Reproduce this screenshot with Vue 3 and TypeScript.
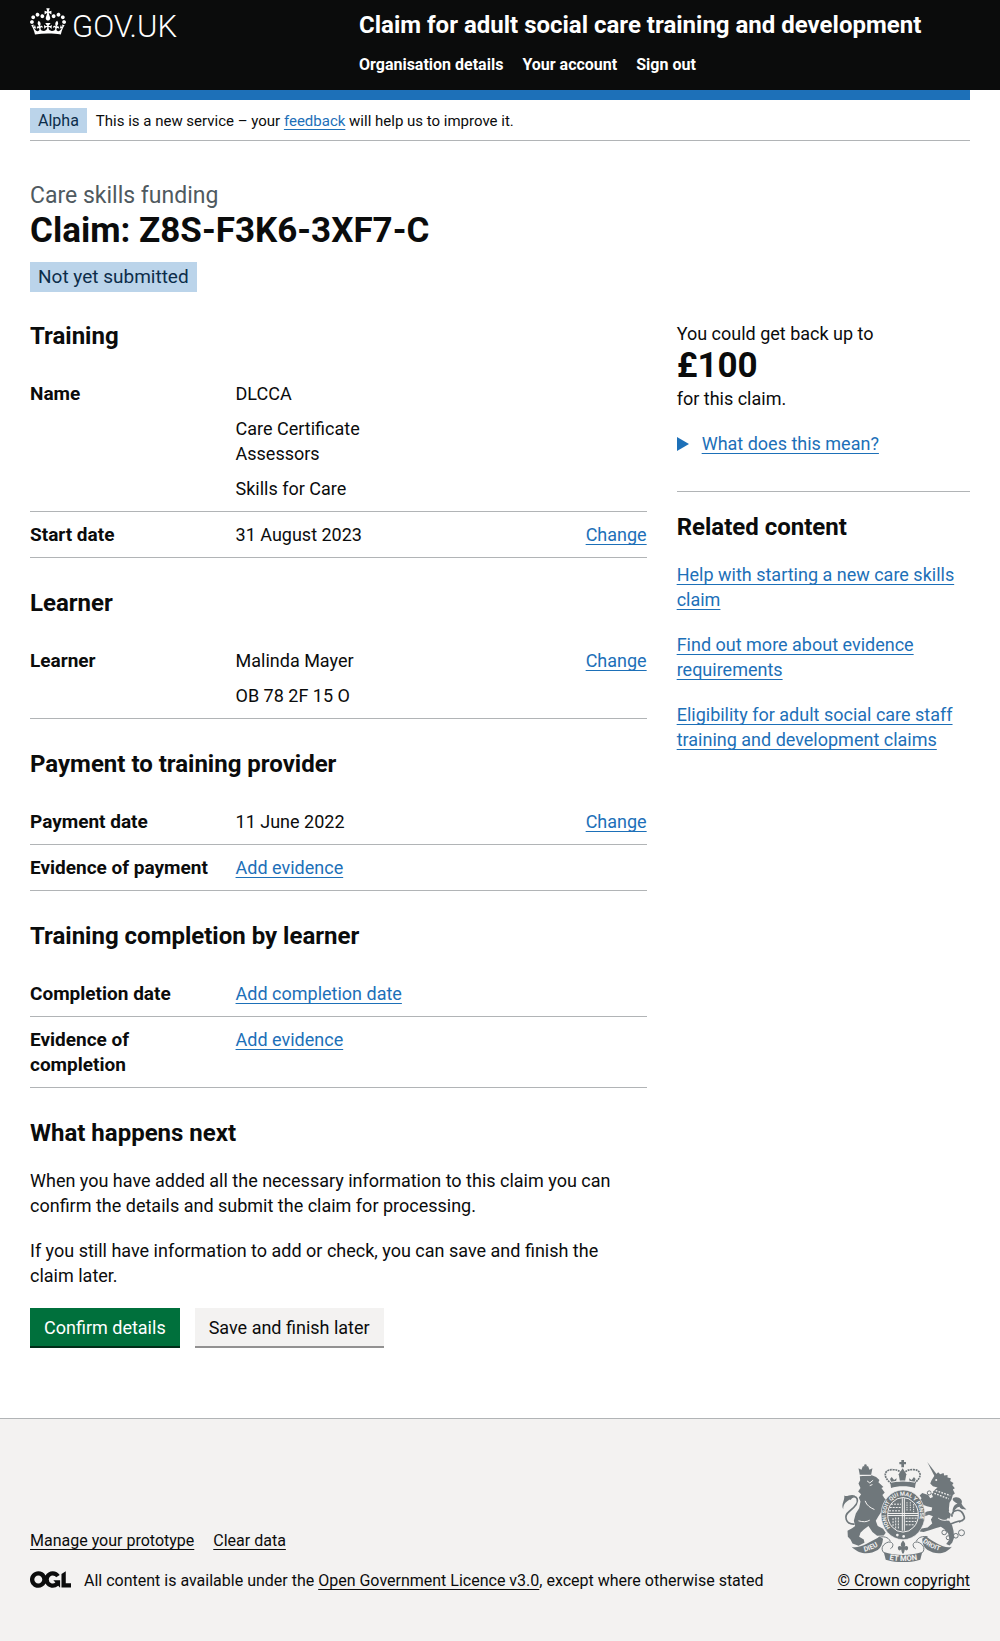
<script setup lang="ts">
interface Row {
  key: string
  values?: string[]
  add?: string
  change?: boolean
}
interface Section {
  title: string
  rows: Row[]
}

const navigation: string[] = ['Organisation details', 'Your account', 'Sign out']

const sections: Section[] = [
  {
    title: 'Training',
    rows: [
      { key: 'Name', values: ['DLCCA', 'Care Certificate Assessors', 'Skills for Care'] },
      { key: 'Start date', values: ['31 August 2023'], change: true },
    ],
  },
  {
    title: 'Learner',
    rows: [{ key: 'Learner', values: ['Malinda Mayer', 'OB 78 2F 15 O'], change: true }],
  },
  {
    title: 'Payment to training provider',
    rows: [
      { key: 'Payment date', values: ['11 June 2022'], change: true },
      { key: 'Evidence of payment', add: 'Add evidence' },
    ],
  },
  {
    title: 'Training completion by learner',
    rows: [
      { key: 'Completion date', add: 'Add completion date' },
      { key: 'Evidence of completion', add: 'Add evidence' },
    ],
  },
]

const related: string[] = [
  'Help with starting a new care skills claim',
  'Find out more about evidence requirements',
  'Eligibility for adult social care staff training and development claims',
]
</script>

<template>
  <div class="page">
    <header class="header">
      <div class="header-inner container">
        <a href="#" class="logo" aria-label="GOV.UK">
          <svg class="crown" viewBox="0 0 132 97" width="36" height="27" fill="currentColor" aria-hidden="true">
            <path fill-rule="evenodd" d="M25 30.2c3.5 1.5 7.7-.2 9.1-3.7 1.5-3.6-.2-7.8-3.9-9.2-3.6-1.4-7.6.3-9.1 3.9-1.4 3.5.3 7.5 3.9 9zM9 39.5c3.6 1.5 7.8-.2 9.2-3.7 1.5-3.6-.2-7.8-3.9-9.1-3.6-1.5-7.6.2-9.1 3.8-1.4 3.5.3 7.5 3.8 9zM4.4 57.2c3.5 1.5 7.7-.2 9.1-3.8 1.5-3.6-.2-7.7-3.9-9.1-3.5-1.5-7.6.3-9.1 3.8-1.4 3.5.3 7.6 3.9 9.1zm38.3-21.4c3.5 1.5 7.7-.2 9.1-3.8 1.5-3.6-.2-7.7-3.9-9.1-3.6-1.5-7.6.3-9.1 3.8-1.3 3.6.4 7.7 3.9 9.1zm64.4-5.6c-3.6 1.5-7.8-.2-9.1-3.7-1.5-3.6.2-7.8 3.8-9.2 3.6-1.4 7.7.3 9.2 3.9 1.3 3.5-.4 7.5-3.9 9zm15.9 9.3c-3.6 1.5-7.7-.2-9.1-3.7-1.5-3.6.2-7.8 3.7-9.1 3.6-1.5 7.7.2 9.2 3.8 1.5 3.5-.3 7.5-3.8 9zm4.7 17.7c-3.6 1.5-7.8-.2-9.2-3.8-1.5-3.6.2-7.7 3.9-9.1 3.6-1.5 7.7.3 9.2 3.8 1.3 3.5-.4 7.6-3.9 9.1zM89.3 35.8c-3.6 1.5-7.8-.2-9.2-3.8-1.4-3.6.2-7.7 3.9-9.1 3.6-1.5 7.7.3 9.2 3.8 1.4 3.6-.3 7.7-3.9 9.1zM69.7 17.7l8.9 4.7V9.3l-8.9 2.8c-.2-.3-.5-.6-.9-.9L72.4 0H59.6l3.5 11.2c-.3.3-.6.5-.9.9l-8.8-2.8v13.1l8.8-4.7c.3.3.6.7.9.9l-5 15.4v.1c-.2.8-.4 1.6-.4 2.4 0 4.1 3.1 7.5 7 8.1h.2c.3 0 .7.1 1 .1.4 0 .7 0 1-.1h.2c4-.6 7.1-4.1 7.1-8.1 0-.8-.1-1.7-.4-2.4V34l-5.1-15.4c.4-.2.7-.6 1-.9zM66 92.8c16.9 0 32.8 1.1 47.1 3.2 4-16.9 8.9-26.7 14-33.5l-9.6-3.4c1 4.9 1.1 7.2 0 10.2-1.5-1.4-3-4.3-4.2-8.7L108.6 76c2.8-2 5-3.2 7.5-3.3-4.4 9.4-10 11.9-13.6 11.2-4.3-.8-6.3-4.6-5.6-7.9 1-4.7 5.7-5.9 8-.5 4.3-8.7-3-11.4-7.6-8.8 7.1-7.2 7.9-13.5 2.1-21.1-8 6.1-8.1 12.3-4.5 20.8-4.7-5.4-12.1-2.5-9.5 6.2 3.4-5.2 7.9-2 7.2 3.1-.6 4.3-6.4 7.8-13.5 7.2-10.3-.9-10.9-8-11.2-13.8 2.5-.5 7.1 1.8 11 7.3L80.2 60c-4.1 4.4-8 5.3-12.3 5.4 1.4-4.4 8-11.6 8-11.6H55.5s6.4 7.2 7.9 11.6c-4.2-.1-8-1-12.3-5.4l1.4 16.4c3.9-5.5 8.5-7.7 10.9-7.3-.3 5.8-.9 12.8-11.1 13.8-7.2.6-12.9-2.9-13.5-7.2-.7-5 3.8-8.3 7.1-3.1 2.7-8.7-4.6-11.6-9.4-6.2 3.7-8.5 3.6-14.7-4.6-20.8-5.8 7.6-5 13.9 2.2 21.1-4.7-2.6-11.9.1-7.7 8.8 2.3-5.5 7.1-4.2 8.1.5.7 3.3-1.3 7.1-5.7 7.9-3.5.7-9-1.8-13.5-11.2 2.5.1 4.7 1.3 7.5 3.3l-4.7-15.4c-1.2 4.4-2.7 7.2-4.3 8.7-1.1-3-.9-5.3 0-10.2l-9.5 3.4c5 6.9 9.9 16.7 14 33.5 14.8-2.1 30.8-3.2 47.7-3.2z" />
          </svg>
          <span class="logotype">GOV.UK</span>
        </a>
        <div class="header-content">
          <a href="#" class="service-name">Claim for adult social care training and development</a>
          <nav class="nav" aria-label="Menu">
            <a v-for="item in navigation" :key="item" href="#">{{ item }}</a>
          </nav>
        </div>
      </div>
    </header>

    <div class="container">
      <div class="blue-bar"></div>
      <div class="phase-banner">
        <strong class="tag tag-small">Alpha</strong>
        <span class="phase-text">This is a new service – your <a href="#" class="link">feedback</a> will help us to improve it.</span>
      </div>

      <main class="main">
        <span class="caption">Care skills funding</span>
        <h1>Claim: Z8S-F3K6-3XF7-C</h1>
        <strong class="tag">Not yet submitted</strong>

        <div class="columns">
          <div class="primary">
            <section v-for="section in sections" :key="section.title" class="section">
              <h2>{{ section.title }}</h2>
              <dl class="summary">
                <div v-for="row in section.rows" :key="row.key" class="row">
                  <dt>{{ row.key }}</dt>
                  <dd class="value">
                    <p v-for="value in row.values" :key="value">{{ value }}</p>
                    <a v-if="row.add" href="#" class="link">{{ row.add }}</a>
                  </dd>
                  <dd class="action"><a v-if="row.change" href="#" class="link">Change</a></dd>
                </div>
              </dl>
            </section>

            <section class="next">
              <h2>What happens next</h2>
              <p>When you have added all the necessary information to this claim you can confirm the details and submit the claim for processing.</p>
              <p>If you still have information to add or check, you can save and finish the claim later.</p>
              <div class="buttons">
                <button type="button" class="button">Confirm details</button>
                <button type="button" class="button secondary">Save and finish later</button>
              </div>
            </section>
          </div>

          <aside class="aside">
            <div>You could get back up to</div>
            <div class="amount">£100</div>
            <div>for this claim.</div>
            <details class="details">
              <summary>
                <svg class="arrow" viewBox="0 0 12 14" width="12" height="14" aria-hidden="true"><path d="M0 0 12 7 0 14z" fill="#1d70b8" /></svg>
                <span class="link">What does this mean?</span>
              </summary>
            </details>
            <div class="related">
              <h2>Related content</h2>
              <ul>
                <li v-for="item in related" :key="item"><a href="#" class="link">{{ item }}</a></li>
              </ul>
            </div>
          </aside>
        </div>
      </main>
    </div>

    <footer class="footer">
      <div class="footer-inner container">
        <div class="footer-meta">
          <ul class="footer-links">
            <li><a href="#">Manage your prototype</a></li>
            <li><a href="#">Clear data</a></li>
          </ul>
          <div class="licence">
            <svg class="ogl" viewBox="0 0 483 196" width="41" height="17" aria-hidden="true">
              <path fill="currentColor" d="M421.5 142.8V.1l-50.7 32.3v161.1h112.4v-50.7zm-122.3-9.6A47.12 47.12 0 0 1 221 97.8c0-26 21.1-47.1 47.1-47.1 16.7 0 31.4 8.7 39.7 21.8l42.7-27.2A97.63 97.63 0 0 0 268.1 0c-36.5 0-68.3 20.1-85.1 49.7A98 98 0 0 0 97.8 0C43.9 0 0 43.9 0 97.8s43.9 97.8 97.8 97.8c36.5 0 68.3-20.1 85.1-49.7a97.76 97.76 0 0 0 149.6 25.4l19.4 22.2h3v-87.8h-80l24.3 27.5zM97.8 145c-26 0-47.1-21.1-47.1-47.1s21.1-47.1 47.1-47.1 47.1 21.1 47.1 47.1S123.8 145 97.8 145" />
            </svg>
            <span>All content is available under the <a href="#">Open Government Licence v3.0</a>, except where otherwise stated</span>
          </div>
        </div>
        <div class="copyright">
          <svg class="crest" viewBox="64 54 378 310" width="126" height="103" aria-hidden="true">
            <g fill="#6f777b">
              <!-- lion -->
              <path d="M120 102 116 82l9 4 4-10h16l4 10 9-4-4 20z" />
              <circle cx="137" cy="74" r="4" />
              <path d="M120 106 156 103 169 108 179 117 176 124 191 138 185 141 195 155 188 162 194 172 202 178 207 184 200 190 190 187 196 197 206 205 206 216 196 222 184 214 176 226 168 240 174 256 190 264 198 276 192 284 172 285 158 274 146 256 132 266 122 276 118 288 132 296 134 306 116 315 98 308 92 296 84 288 83 270 98 262 106 256 102 240 108 218 118 202 122 182 117 170 124 160 115 152 122 141 116 128 121 118z" />
              <path d="M70 205C62 190 76 178 73 164 82 170 90 158 106 164 98 166 92 176 84 180 76 186 70 192 70 205z" />
              <!-- unicorn -->
              <path d="M323 63 352 101 345 106z" />
              <path d="M345 104 356 94 362 100 372 96 374 104 384 102 384 110 394 112 392 120 402 126 398 132 406 142 400 146 406 158 400 162 396 176 390 186 388 205 394 222 388 238 398 254 402 270 404 290 398 306 390 314 380 310 390 296 386 278 376 266 364 258 350 262 332 268 312 274 300 272 302 264 324 260 338 248 334 236 340 226 328 222 316 226 306 222 322 212 336 210 338 200 322 196 306 190 300 178 306 172 300 164 308 156 326 162 332 172 340 168 336 158 344 148 354 140 340 136 332 128 336 118z" />
              <path d="M401 222C396 206 402 192 414 188 400 182 394 172 406 170 418 166 432 178 426 188 430 198 436 200 441 206 430 206 424 206 420 198 410 200 404 208 401 222z" />
              <!-- royal crown -->
              <path d="M245 57h8v6h6v7h-6v9h-8v-9h-6v-7h6z" />
              <path d="M212 127c12-8 66-8 76 0l-2 14c-18-7-54-7-72 0z" />
              <path d="M249 82l11 18-5 28h-13l-5-28z" />
              <path d="M216 108l7 9 8-5-3 15h-12l-5-13zM283 108l-7 9-8-5 3 15h12l5-13z" />
              <!-- shield and garter -->
              <ellipse cx="250" cy="222" rx="66" ry="75" stroke="#f3f2f1" stroke-width="2" />
              <!-- scrolls -->
              <path d="M95 318C116 326 150 304 180 288L190 294C188 310 184 320 174 328 152 340 124 346 95 318z" />
              <path d="M397 318C376 326 342 304 318 286L308 294C308 310 314 320 324 328 346 340 372 346 397 318z" />
              <path d="M192 334C226 346 272 346 308 334L302 357C272 367 228 367 198 357z" />
              <!-- fleur-de-lis -->
              <path d="M250 299c8 8 8 14 4 20 4-6 14-4 11 6-1 5-8 6-9 1-2 4-1 10-6 14-5-4-4-10-6-14-1 5-8 4-9-1-3-10 7-12 11-6-4-6-4-12 4-20z" />
            </g>
            <g fill="none" stroke="#6f777b">
              <path stroke-width="5" d="M104 250C78 252 70 226 88 212S116 184 112 174C108 164 96 166 90 176" />
              <path stroke-width="5" d="M392 250C406 246 416 238 430 240M398 228C392 210 420 200 430 218S434 236 418 244" />
              <path stroke-width="5" stroke-dasharray="6 2" d="M216 128C184 106 196 84 220 86 238 86 246 94 249 106 252 94 260 86 278 86 302 84 314 106 282 128" />
              <path stroke-width="3" d="M192 336C180 322 192 308 206 304 224 302 222 320 212 324M308 336C320 322 308 308 294 304 276 302 278 320 288 324M176 290C190 286 206 288 212 302M324 288C310 286 296 288 290 302" />
              <g stroke-width="3">
                <circle cx="329" cy="156" r="6" />
                <circle cx="374" cy="275" r="7" />
                <circle cx="386" cy="291" r="6" />
                <circle cx="409" cy="285" r="7" />
                <circle cx="426" cy="276" r="9" />
              </g>
            </g>
            <g fill="none" stroke="#f3f2f1">
              <ellipse cx="250" cy="222" rx="46" ry="52" stroke-width="3" />
              <path stroke-width="3" d="M248 172v98M254 172v98M204 218h92M204 224h92" />
              <path stroke-width="3" stroke-dasharray="6 3" d="M214 190h30M210 200h34M208 210h36M220 232v24M228 230v34M236 230v36M258 232h34M258 242h32M258 252h26" />
              <path stroke-width="3" stroke-dasharray="4 3" d="M262 184v28M272 184v28M282 190v24" />
              <path stroke-width="4" stroke-dasharray="5 4" d="M336 154 388 174M340 146 392 164" />
              <path stroke-width="3" d="M120 103h34M142 120l8 6 10-8M150 134l8-3M214 124c18-5 54-5 72 0M136 180c4 14 18 22 28 26M116 240c14 4 24 4 34-2M356 232c12 8 22 8 30 4" />
            </g>
            <g fill="#f3f2f1">
              <circle cx="233" cy="283" r="4" />
              <circle cx="252" cy="287" r="4" />
              <circle cx="393" cy="212" r="5" />
              <circle cx="386" cy="236" r="4" />
              <circle cx="350" cy="117" r="3" />
            </g>
            <defs>
              <path id="garter" d="M212 261A51 58 0 1 1 288 261" />
              <path id="scroll-left" d="M134 333Q160 328 190 305" />
              <path id="scroll-mid" d="M204 356Q250 366 300 356" />
              <path id="scroll-right" d="M309 304Q334 326 376 334" />
            </defs>
            <g fill="#f3f2f1" class="motto">
              <text font-size="17"><textPath href="#garter">HONI SOIT QUI MAL Y PENSE</textPath></text>
              <text font-size="21"><textPath href="#scroll-left">DIEU</textPath></text>
              <text font-size="23"><textPath href="#scroll-mid" startOffset="5">ET MON</textPath></text>
              <text font-size="20"><textPath href="#scroll-right">DROIT</textPath></text>
            </g>
          </svg>
          <a href="#">© Crown copyright</a>
        </div>
      </div>
    </footer>
  </div>
</template>

<style>
body {
  margin: 0;
  background: #f3f2f1;
}
</style>

<style scoped>
.page {
  background: #fff;
  color: #0b0c0c;
  font-family: Roboto, "Liberation Sans", sans-serif;
  font-size: 18px;
  line-height: 25px;
}
h1,
h2,
p,
ul,
dl,
dd {
  margin: 0;
}
ul {
  padding: 0;
  list-style: none;
}
.container {
  max-width: 960px;
  margin: 0 auto;
  padding: 0 30px;
}
.link {
  color: #1d70b8;
  text-decoration: underline;
  text-decoration-thickness: 1px;
  text-underline-offset: 3px;
  text-decoration-skip-ink: none;
}
.header {
  background: #0b0c0c;
  color: #fff;
}
.header-inner {
  display: flex;
  padding-bottom: 15px;
}
.header a {
  color: #fff;
  text-decoration: none;
}
.logo {
  display: flex;
  width: 35%;
  align-items: flex-start;
  gap: 6px;
  padding-top: 8px;
}
.logotype {
  font-size: 31px;
  line-height: 38px;
  font-weight: 300;
}
.header-content {
  padding-top: 10px;
}
.service-name {
  display: block;
  font-size: 24px;
  line-height: 30px;
  font-weight: 700;
}
.nav {
  display: flex;
  gap: 19px;
  padding-top: 15px;
  font-size: 16px;
  line-height: 20px;
  font-weight: 700;
}
.blue-bar {
  height: 10px;
  background: #1d70b8;
}
.phase-banner {
  display: flex;
  align-items: center;
  gap: 9px;
  padding: 8px 0 7px;
  border-bottom: 1px solid #b1b4b6;
  font-size: 15px;
  line-height: 20px;
}
.tag {
  display: block;
  width: fit-content;
  padding: 2px 8px 3px;
  background: #bbd4ea;
  color: #0c2d4a;
  font-size: 19px;
  font-weight: 400;
}
.tag-small {
  padding: 3px 8px 2px;
  font-size: 16px;
}
.main {
  padding: 40px 0 72px;
}
.caption {
  display: block;
  color: #505a5f;
  font-size: 23px;
  line-height: 30px;
}
h1 {
  margin-bottom: 11px;
  font-size: 35px;
  line-height: 40px;
}
h2 {
  margin-bottom: 20px;
  font-size: 24px;
  line-height: 30px;
}
.columns {
  display: flex;
  gap: 30px;
  margin-top: 29px;
}
.primary {
  flex: none;
  width: calc(66.6667% - 10px);
}
.aside {
  flex: 1;
}
.section {
  margin-bottom: 30px;
}
.row {
  display: flex;
  border-bottom: 1px solid #b1b4b6;
  padding: 10px 0;
}
dt,
.value {
  box-sizing: border-box;
  width: 33.3333%;
  padding-right: 20px;
}
dt {
  font-size: 19px;
  font-weight: 700;
}
.value p + p {
  margin-top: 10px;
}
.action {
  flex: 1;
  text-align: right;
}
.next p {
  margin-bottom: 20px;
  padding-right: 20px;
}
.buttons {
  display: flex;
  gap: 15px;
}
.button {
  border: 0;
  padding: 7px 14px 6px;
  background: #00703c;
  box-shadow: 0 2px 0 #002d18;
  color: #fff;
  font: inherit;
}
.secondary {
  background: #f3f2f1;
  box-shadow: 0 2px 0 #929191;
  color: #0b0c0c;
}
.amount {
  font-size: 35px;
  line-height: 40px;
  font-weight: 700;
}
.details {
  margin: 20px 0 35px;
}
summary {
  display: flex;
  align-items: center;
  gap: 13px;
  list-style: none;
}
.related {
  padding-top: 20px;
  border-top: 1px solid #b1b4b6;
}
.related li {
  margin-bottom: 20px;
}
.footer {
  border-top: 1px solid #b1b4b6;
  background: #f3f2f1;
  font-size: 16px;
  line-height: 20px;
}
.footer-inner {
  display: flex;
  align-items: flex-end;
  justify-content: space-between;
  padding-top: 40px;
  padding-bottom: 50px;
}
.footer a {
  color: #0b0c0c;
  text-decoration: underline;
  text-decoration-thickness: 1px;
  text-underline-offset: 3px;
  text-decoration-skip-ink: none;
}
.footer-links {
  display: flex;
  gap: 19px;
  margin-bottom: 20px;
}
.licence {
  display: flex;
  gap: 13px;
}
.ogl {
  flex: none;
}
.copyright {
  display: flex;
  flex-direction: column;
  align-items: center;
  gap: 9px;
}
.motto {
  font-weight: 700;
}
</style>
